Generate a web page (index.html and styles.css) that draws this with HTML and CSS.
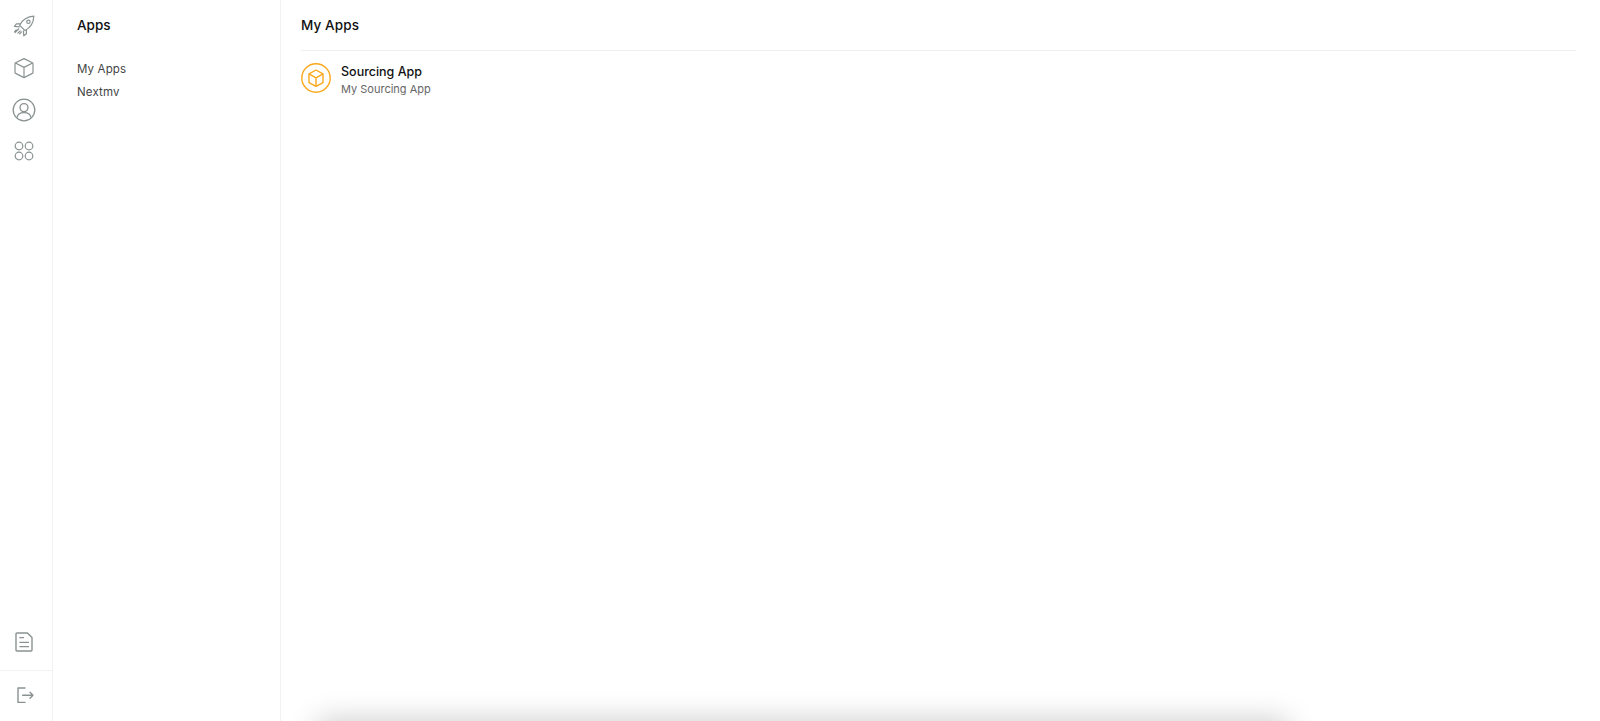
FILE: index.html
```html
<!DOCTYPE html>
<html lang="en">
<head>
  <meta charset="UTF-8" />
  <meta name="viewport" content="width=device-width, initial-scale=1.0" />
  <title>My Apps</title>
  <link rel="stylesheet" href="styles.css">
</head>
<body>
  <div class="app">
    <!-- Icon rail -->
    <nav class="rail">
      <div class="rail-top">
        <a class="rail-icon">
          <svg width="24" height="24" viewBox="0 0 24 24" fill="none" stroke="#8a9292" stroke-width="1.2" stroke-linecap="round" stroke-linejoin="round">
            <path d="M7.6 11.2 C10.5 5.8 15.5 2.6 21.8 2.2 C21.6 8.6 18.4 13.6 13 16.6 L7.6 11.2 Z" />
            <path d="M8.6 9.8 L4.4 9.8 L2.4 12.4 L7.4 12.8" />
            <path d="M14.4 15.6 L14.4 19.8 L11.8 21.8 L11.4 16.8" />
            <circle cx="16.4" cy="7.8" r="1.7" />
            <path d="M6.6 15 L3 18.6 M8.2 16.8 L5.8 19.2 M9.4 18 L7.6 19.8 M4.2 16 L2.6 17.6" />
          </svg>
        </a>
        <a class="rail-icon">
          <svg width="24" height="24" viewBox="0 0 24 24" fill="none" stroke="#8a9292" stroke-width="1.2" stroke-linejoin="round">
            <path d="M12 2.6 L20.4 6.8 Q21 7.1 21 7.8 V16.4 Q21 17.1 20.4 17.4 L12 21.6 L3.6 17.4 Q3 17.1 3 16.4 V7.8 Q3 7.1 3.6 6.8 Z" />
            <path d="M3.4 7 L12 11.4 L20.6 7 M12 11.4 V21.6" />
          </svg>
        </a>
        <a class="rail-icon">
          <svg width="24" height="24" viewBox="0 0 24 24" fill="none" stroke="#8a9292" stroke-width="1.3">
            <circle cx="12" cy="12" r="10.8" />
            <circle cx="12" cy="9.6" r="4" />
            <path d="M5 19.8 C5.4 16 8 14.6 12 14.6 C16 14.6 18.6 16 19 19.8" />
          </svg>
        </a>
        <a class="rail-icon">
          <svg width="24" height="24" viewBox="0 0 24 24" fill="none" stroke="#8a9292" stroke-width="1.2">
            <circle cx="7" cy="6" r="3.8" />
            <circle cx="17" cy="6" r="3.8" />
            <circle cx="7" cy="16" r="3.8" />
            <circle cx="17" cy="16" r="3.8" />
          </svg>
        </a>
      </div>
      <div class="rail-bottom">
        <a class="rail-icon docs">
          <svg width="24" height="24" viewBox="0 0 24 24" fill="none" stroke="#8a9292" stroke-width="1.4" stroke-linejoin="round">
            <path d="M5 3 H15.4 L20 7.6 V20 Q20 21 19 21 H5 Q4 21 4 20 V4 Q4 3 5 3 Z" />
            <path d="M7.4 7.6 H12 M7.4 12.4 H17 M7.4 16.6 H17" />
          </svg>
        </a>
        <a class="rail-icon logout">
          <svg width="24" height="24" viewBox="0 0 24 24" fill="none" stroke="#8a9292" stroke-width="1.4" stroke-linejoin="round" stroke-linecap="round">
            <path d="M12 5 H5 V19.4 H12" />
            <path d="M9.6 12.2 H20 M17 9.2 L20 12.2 L17 15.2" />
          </svg>
        </a>
      </div>
    </nav>

    <!-- Section sidebar -->
    <aside class="sidebar">
      <h2 class="sidebar-title">Apps</h2>
      <ul class="sidebar-list">
        <li>My Apps</li>
        <li>Nextmv</li>
      </ul>
    </aside>

    <!-- Main -->
    <main class="main">
      <h1 class="main-title">My Apps</h1>
      <div class="app-row">
        <svg class="app-badge" width="30" height="30" viewBox="0 0 30 30" fill="none" stroke="#f9a81c" stroke-width="1.4" stroke-linejoin="round">
          <circle cx="15" cy="15" r="14.2" />
          <path d="M15 7 L22 10.8 V19.6 L15 23.4 L8 19.6 V10.8 Z" />
          <path d="M8 10.8 L15 14.8 L22 10.8 M15 14.8 V23.4" />
        </svg>
        <div class="app-text">
          <div class="app-name">Sourcing App</div>
          <div class="app-desc">My Sourcing App</div>
        </div>
      </div>
    </main>
  </div>
  <div class="bottom-shadow"></div>
</body>
</html>
```
FILE: styles.css
```css
html, body {
  margin: 0;
  padding: 0;
  height: 100%;
  overflow: hidden;
}

body {
  font-family: Inter, "Noto Sans", sans-serif;
  background-color: white;
  color: #111;
}

.app {
  display: flex;
  height: 721px;
}

.rail {
  width: 53px;
  flex-shrink: 0;
  border-right: 1px solid #f1f2f2;
  box-sizing: border-box;
  display: flex;
  flex-direction: column;
  justify-content: space-between;
}

.rail-top {
  display: flex;
  flex-direction: column;
  align-items: center;
  padding: 14px 4px 0 0;
  gap: 18px;
}

.rail-icon {
  display: flex;
  align-items: center;
  justify-content: center;
  width: 24px;
  height: 24px;
}

.rail-bottom {
  display: flex;
  flex-direction: column;
  align-items: center;
}

.docs {
  margin: 0 4px 16px 0;
}

.logout {
  width: 100%;
  box-sizing: content-box;
  border-top: 1px solid #f1f2f2;
  padding: 12px 0 14px;
}

.logout svg {
  margin-right: 3px;
}

.sidebar {
  width: 228px;
  flex-shrink: 0;
  border-right: 1px solid #f1f2f2;
  padding: 0 24px;
  box-sizing: border-box;
}

.sidebar-title {
  margin: 0;
  padding-top: 16px;
  font-size: 13.5px;
  line-height: 18px;
  font-weight: 500;
}

.sidebar-list {
  list-style: none;
  margin: 24px 0 0;
  padding: 0;
  font-size: 11.5px;
  letter-spacing: 0.15px;
  color: #444;
}

.sidebar-list li {
  height: 23px;
  line-height: 23px;
}

.main {
  flex: 1;
  padding: 0 24px 0 20px;
}

.main-title {
  margin: 0;
  padding: 16px 0 16px;
  font-size: 13.5px;
  letter-spacing: 0.1px;
  line-height: 18px;
  font-weight: 500;
  border-bottom: 1px solid #eff0f0;
}

.app-row {
  display: flex;
  align-items: flex-start;
  gap: 10px;
  margin-top: 12px;
}

.app-badge {
  flex-shrink: 0;
}

.app-name {
  font-size: 12.5px;
  line-height: 17px;
  font-weight: 500;
}

.app-desc {
  font-size: 11px;
  line-height: 18px;
  color: #666;
}

/* sits below the fold, only its shadow shows */
.bottom-shadow {
  position: fixed;
  left: 318px;
  right: 312px;
  bottom: -40px;
  height: 40px;
  box-shadow: 0 0 30px 0 rgba(0, 0, 0, 0.22);
}
```
